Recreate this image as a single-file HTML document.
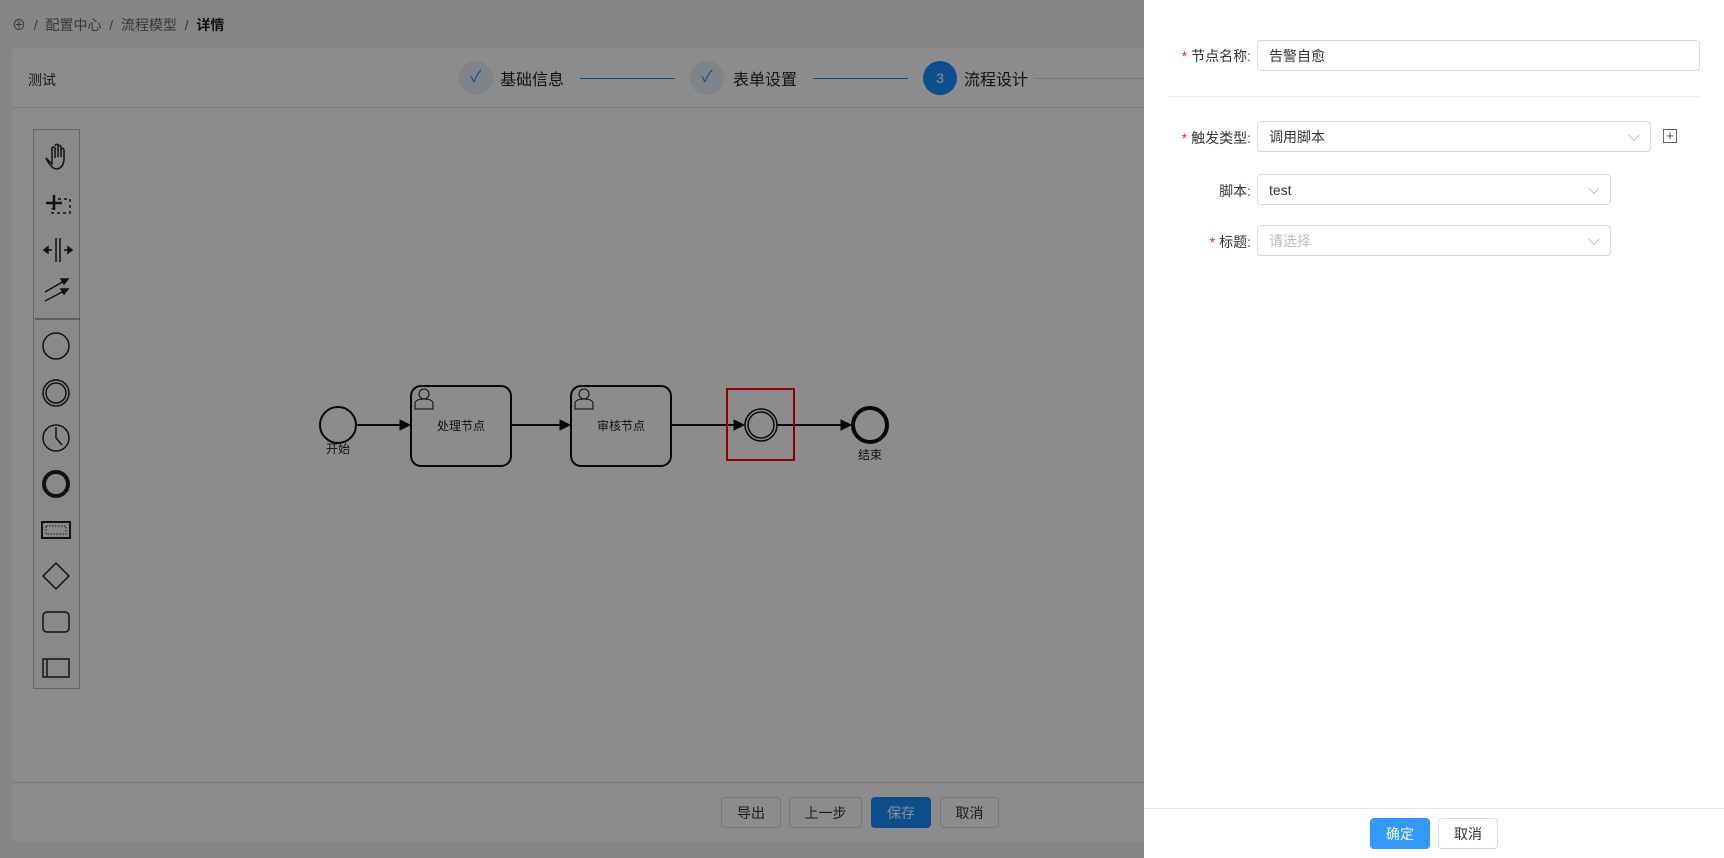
<!DOCTYPE html>
<html><head><meta charset="utf-8"><style>
*{box-sizing:border-box;margin:0;padding:0}
body{width:1724px;height:858px;overflow:hidden;position:relative;background:#f0f2f5;font-family:"Liberation Sans","Noto Sans CJK SC",sans-serif;font-size:14px;color:#333}
.abs{position:absolute}
.card{left:12px;top:48px;width:1740px;height:794px;background:#fff;border-radius:4px}
.btn{position:absolute;top:797px;height:31px;border:1px solid #d9d9d9;border-radius:4px;background:#fff;font-size:14px;display:flex;align-items:center;justify-content:center;color:#333}
.mask{left:0;top:0;width:1724px;height:858px;background:rgba(0,0,0,0.45)}
.drawer{left:1144px;top:0;width:580px;height:858px;background:#fff}
.lbl{position:absolute;font-size:14px;color:#333;text-align:right}
.req{color:#f5222d;margin-right:4px}
.inp{position:absolute;border:1px solid #d9d9d9;border-radius:4px;background:#fff;padding-left:11px;display:flex;align-items:center;font-size:14px;color:#333}
.arr{position:absolute;right:12px;top:50%;width:8px;height:8px;border-right:1px solid #bbb;border-bottom:1px solid #bbb;transform:translateY(-70%) rotate(45deg)}
</style></head><body>
<div class="abs" style="left:12px;top:15px;font-size:14px;color:#666">⊕ &nbsp;/&nbsp; 配置中心 &nbsp;/&nbsp; 流程模型 &nbsp;/&nbsp; <b style="color:#222">详情</b></div>
<div class="abs card"></div>
<div class="abs" style="left:12px;top:107px;width:1140px;height:1px;background:#e8e8e8"></div>
<div class="abs" style="left:28px;top:70px;font-size:14px;color:#333">测试</div>
<div class="abs" style="left:459px;top:61px;width:34px;height:34px;border-radius:50%;background:#e6f0fb;color:#1890ff;text-align:center;line-height:34px;font-size:16px">✓</div>
<div class="abs" style="left:500px;top:66px;font-size:16px;color:#222">基础信息</div>
<div class="abs" style="left:580px;top:78px;width:95px;height:1px;background:#1890ff"></div>
<div class="abs" style="left:690px;top:61px;width:34px;height:34px;border-radius:50%;background:#e6f0fb;color:#1890ff;text-align:center;line-height:34px;font-size:16px">✓</div>
<div class="abs" style="left:733px;top:66px;font-size:16px;color:#222">表单设置</div>
<div class="abs" style="left:813px;top:78px;width:95px;height:1px;background:#1890ff"></div>
<div class="abs" style="left:923px;top:61px;width:34px;height:34px;border-radius:50%;background:#1890ff;color:#fff;text-align:center;line-height:34px;font-size:14px">3</div>
<div class="abs" style="left:964px;top:66px;font-size:16px;color:#222">流程设计</div>
<div class="abs" style="left:1034px;top:78px;width:110px;height:1px;background:#ddd"></div>
<div class="abs" style="left:33px;top:129px;width:47px;height:560px;border:1px solid #bbb;background:#fafafa"></div>
<svg class="abs" style="left:20px;top:120px" width="80" height="580" viewBox="0 0 80 580" fill="none" stroke="#222" stroke-width="1.5">
<path d="M26 38 L32 44 L32 28 Q33 26 35 28 L35 38 M35 26 Q36 23 38 25 L38 37 M38 26 Q40 24 41 27 L41 37 M41 29 Q43 27 44 30 L44 40 Q43 48 37 49 Q31 49 26 38"/>
<path d="M34 75 V90 M26 83 H42" stroke-width="2.5"/><path d="M38 79 H50 V93 H32 V88" stroke-dasharray="3 3"/>
<path d="M36 118 V142 M40 118 V142 M24 130 H32 M44 130 H52"/><path d="M24 130 l4 -3 v6z M52 130 l-4 -3 v6z" fill="#222"/>
<path d="M25 172 L46 160 M25 181 L46 170"/><path d="M48 159 l-7 0 l3 5z M48 169 l-7 0 l3 5z" fill="#222"/>
<line x1="15" y1="199" x2="60" y2="199" stroke="#666" stroke-width="1"/>
<circle cx="36" cy="226" r="13"/>
<circle cx="36" cy="273" r="13"/><circle cx="36" cy="273" r="10"/>
<circle cx="36" cy="318" r="13"/><path d="M36 307 V318 L42 325"/>
<circle cx="36" cy="364" r="12" stroke-width="4"/>
<rect x="22" y="402" width="28" height="16" stroke-width="2"/><rect x="26" y="406" width="20" height="8" stroke-dasharray="1.5 1.5" stroke-width="1"/>
<path d="M36 443 L49 456 L36 469 L23 456Z"/>
<rect x="23" y="492" width="26" height="20" rx="4"/>
<rect x="23" y="539" width="26" height="18"/><line x1="27" y1="539" x2="27" y2="557"/>
</svg>
<svg class="abs" style="left:0;top:0" width="1144" height="858" fill="none" stroke="#111">
<circle cx="338" cy="425" r="18" stroke-width="2"/>
<line x1="356" y1="425" x2="402" y2="425" stroke-width="2"/><path d="M410 425 l-10 -5 v10z" fill="#111"/>
<rect x="411" y="386" width="100" height="80" rx="10" stroke-width="2"/>
<line x1="511" y1="425" x2="562" y2="425" stroke-width="2"/><path d="M570 425 l-10 -5 v10z" fill="#111"/>
<rect x="571" y="386" width="100" height="80" rx="10" stroke-width="2"/>
<line x1="671" y1="425" x2="736" y2="425" stroke-width="2"/><path d="M744 425 l-10 -5 v10z" fill="#111"/>
<circle cx="761" cy="425" r="16" stroke-width="1.5"/><circle cx="761" cy="425" r="13" stroke-width="1.5"/>
<line x1="777" y1="425" x2="843" y2="425" stroke-width="2"/><path d="M851 425 l-10 -5 v10z" fill="#111"/>
<circle cx="870" cy="425" r="17" stroke-width="4"/>
<rect x="727" y="389" width="67" height="71" stroke="#f00" stroke-width="2"/>
<g stroke-width="1"><circle cx="424" cy="394" r="5"/><path d="M415 409 v-6 q1-4 9-4 q8 0 9 4 v6z"/>
<circle cx="584" cy="394" r="5"/><path d="M575 409 v-6 q1-4 9-4 q8 0 9 4 v6z"/></g>
<g stroke="none" fill="#222" font-size="12" font-family="Liberation Sans,Noto Sans CJK SC,sans-serif">
<text x="338" y="453" text-anchor="middle">开始</text>
<text x="461" y="430" text-anchor="middle">处理节点</text>
<text x="621" y="430" text-anchor="middle">审核节点</text>
<text x="870" y="459" text-anchor="middle">结束</text></g>
</svg>
<div class="abs" style="left:12px;top:782px;width:1140px;height:1px;background:#ddd"></div>
<div class="btn" style="left:721px;width:60px">导出</div>
<div class="btn" style="left:789px;width:73px">上一步</div>
<div class="btn" style="left:871px;width:60px;background:#1890ff;border-color:#1890ff;color:#fff">保存</div>
<div class="btn" style="left:940px;width:59px">取消</div>
<div class="abs mask"></div>
<div class="abs drawer">
<div class="lbl" style="left:0;width:107px;top:46px"><span class="req">*</span>节点名称:</div>
<div class="inp" style="left:113px;top:40px;width:443px;height:31px">告警自愈</div>
<div class="abs" style="left:24px;top:96px;width:532px;height:1px;background:#eee"></div>
<div class="lbl" style="left:0;width:107px;top:128px"><span class="req">*</span>触发类型:</div>
<div class="inp" style="left:113px;top:121px;width:394px;height:31px">调用脚本<span class="arr"></span></div>
<div class="abs" style="left:519px;top:129px;width:14px;height:14px;border:1px solid #666;font-size:13px;line-height:11px;text-align:center;color:#444">+</div>
<div class="lbl" style="left:0;width:107px;top:181px">脚本:</div>
<div class="inp" style="left:113px;top:174px;width:354px;height:31px">test<span class="arr"></span></div>
<div class="lbl" style="left:0;width:107px;top:232px"><span class="req">*</span>标题:</div>
<div class="inp" style="left:113px;top:225px;width:354px;height:31px;color:#bbb">请选择<span class="arr"></span></div>
<div class="abs" style="left:0;top:808px;width:580px;height:1px;background:#e8e8e8"></div>
<div class="btn" style="left:226px;top:818px;width:60px;background:#3399ff;border-color:#3399ff;color:#fff">确定</div>
<div class="btn" style="left:294px;top:818px;width:60px">取消</div>
</div>
</body></html>
